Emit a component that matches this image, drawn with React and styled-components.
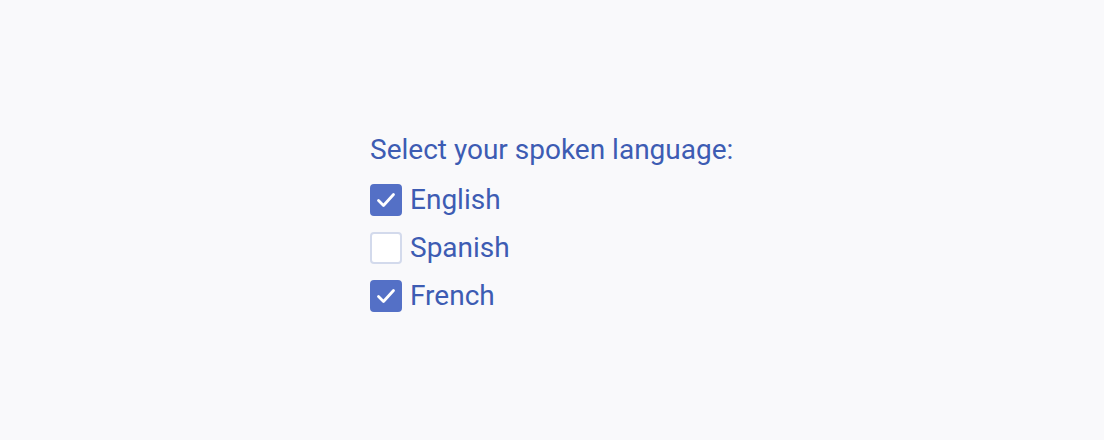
import React, { useState } from "react";
import styled, { createGlobalStyle } from "styled-components";

const Global = createGlobalStyle`
  html, body { margin: 0; padding: 0; background: #f9f9fb; }
  body { font-family: Roboto, "Noto Sans", sans-serif; }
`;

const Page = styled.div`
  height: 440px;
  display: flex;
  align-items: center;
  justify-content: center;
`;

const Group = styled.div`
  padding-top: 6px;
  display: flex;
  flex-direction: column;
  gap: 16px;
  min-width: 364px;
`;

const Title = styled.div`
  margin-bottom: 2px;
  font-size: 28px;
  line-height: 32px;
  color: #3d5cb3;
`;

const Row = styled.label`
  display: flex;
  align-items: center;
  gap: 8px;
  font-size: 28px;
  line-height: 32px;
  color: #3d5cb3;
  cursor: pointer;
`;

const Box = styled.span`
  width: 32px;
  height: 32px;
  box-sizing: border-box;
  border-radius: 4px;
  display: flex;
  align-items: center;
  justify-content: center;
  background: ${(p) => (p.$checked ? "#5470c6" : "#ffffff")};
  border: 2px solid ${(p) => (p.$checked ? "#5470c6" : "#d3daec")};
`;

const Hidden = styled.input`
  position: absolute;
  opacity: 0;
  width: 0;
  height: 0;
`;

const Check = () => (
  <svg width="24" height="24" viewBox="0 0 24 24" fill="none">
    <path d="M4.5 12.5l5 5 10-11" stroke="#fff" strokeWidth="2.8" strokeLinecap="round" strokeLinejoin="round" />
  </svg>
);

export default function App() {
  const [state, setState] = useState({ English: true, Spanish: false, French: true });
  return (
    <Page>
      <Global />
      <Group role="group" aria-labelledby="lang-title">
        <Title id="lang-title">Select your spoken language:</Title>
        {Object.keys(state).map((k) => (
          <Row key={k}>
            <Hidden
              type="checkbox"
              checked={state[k]}
              onChange={() => setState((s) => ({ ...s, [k]: !s[k] }))}
            />
            <Box $checked={state[k]}>{state[k] && <Check />}</Box>
            {k}
          </Row>
        ))}
      </Group>
    </Page>
  );
}
